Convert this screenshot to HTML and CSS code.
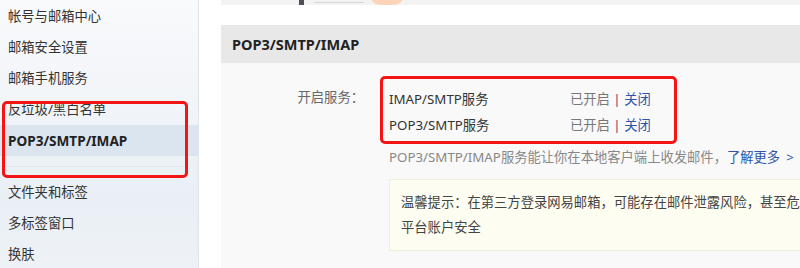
FILE: index.html
```html
<!DOCTYPE html>
<html lang="zh-CN">
<head>
  <meta charset="UTF-8" />
  <title>设置 - POP3/SMTP/IMAP</title>
  <link rel="stylesheet" href="styles.css">
</head>
<body>
  <div class="page">
    <!-- left nav -->
    <div class="sidebar">
      <ul class="nav">
        <li>帐号与邮箱中心</li>
        <li>邮箱安全设置</li>
        <li>邮箱手机服务</li>
        <li>反垃圾/黑白名单</li>
        <li class="active">POP3/SMTP/IMAP</li>
      </ul>
      <div class="nav-sep"></div>
      <ul class="nav">
        <li>文件夹和标签</li>
        <li>多标签窗口</li>
        <li>换肤</li>
      </ul>
      <div class="mark mark-nav"></div>
    </div>

    <!-- main -->
    <div class="main">
      <div class="banner">
        <span class="b-bar"></span>
        <span class="b-text"></span>
        <span class="b-blob"></span>
      </div>

      <div class="section">
        <div class="section-hd">POP3/SMTP/IMAP</div>
        <div class="section-bd">
          <div class="row">
            <div class="row-label">开启服务：</div>
            <div class="row-content">
              <div class="services">
                <div class="svc">
                  <span class="svc-name">IMAP/SMTP服务</span>
                  <span class="svc-state">已开启 <i>|</i> <a>关闭</a></span>
                </div>
                <div class="svc">
                  <span class="svc-name">POP3/SMTP服务</span>
                  <span class="svc-state">已开启 <i>|</i> <a>关闭</a></span>
                </div>
                <div class="mark mark-svc"></div>
              </div>
              <p class="desc">POP3/SMTP/IMAP服务能让你在本地客户端上收发邮件，<a>了解更多<span class="arr">&gt;</span></a></p>
              <div class="tip">温馨提示：在第三方登录网易邮箱，可能存在邮件泄露风险，甚至危害网易邮箱帐号下其他业务/<br>平台账户安全</div>
            </div>
          </div>
        </div>
      </div>
    </div>
  </div>
</body>
</html>
```

FILE: styles.css
```css
html,body{margin:0;height:100%;overflow:hidden;}
body{font-family:"Noto Sans","Noto Sans CJK SC",sans-serif;font-size:13.3px;color:#333;background:#fff;}
ul{margin:0;padding:0;list-style:none;}
p{margin:0;}
a{color:#2f55a8;cursor:pointer;}

.page{display:flex;height:268px;width:1100px;}

/* —— sidebar —— */
.sidebar{position:relative;width:198px;flex:none;padding-top:1px;border-right:1px solid #dde4ec;
  background:linear-gradient(180deg,#f9fafc 0%,#f1f4f8 40%,#e9eff5 75%,#eef2f6 100%);}
.nav li{height:31px;line-height:31px;padding-left:8px;color:#333;white-space:nowrap;}
.nav li.active{background:#dbe5ef;font-weight:bold;color:#222;font-size:13.6px;}
.nav-sep{height:1px;background:#e2e7ec;margin:10px 10px 10px 0;}

/* red annotation boxes */
.mark{position:absolute;border:3px solid #f41414;border-radius:5px;pointer-events:none;}
.mark-nav{left:2px;top:101px;width:180px;height:71px;}

/* —— main —— */
.main{flex:1;padding-left:22px;}
.banner{height:5px;background:#f3f3f3;display:flex;align-items:flex-start;padding-left:78px;gap:10px;overflow:hidden;}
.b-bar{width:5px;height:5px;background:#4e5058;}
.b-text{width:50px;height:1px;margin-top:2px;background:#d6d6d6;}
.b-blob{width:34px;height:10px;margin-top:-5px;margin-left:-4px;border-radius:0 0 17px 17px;background:#fdd4ba;}

.section{margin-top:20px;}
.section-hd{height:38px;line-height:38px;padding-left:11px;background:#e8e8e8;
  font-size:14.5px;font-weight:bold;color:#222;}
.section-bd{background:#f9f9f9;padding-top:23px;height:300px;}

.row{display:flex;}
.row-label{width:143px;text-align:right;line-height:26px;color:#666;flex:none;margin-top:-2px;}
.row-content{padding-left:25px;}

.services{position:relative;}
.svc{display:flex;height:26px;line-height:26px;}
.svc-name{width:181px;color:#333;}
.svc-state{color:#777;}
.svc-state i{font-style:normal;color:#7a4568;}
.mark-svc{left:-9px;top:-10px;width:291px;height:62px;}

.desc{line-height:26px;margin-top:6px;color:#888;white-space:nowrap;}
.arr{margin-left:6px;}

.tip{margin-top:9px;padding:10px 11px;width:560px;line-height:25px;color:#444;
  background:#fdfdf1;border:1px solid #efefdc;white-space:nowrap;}
```
